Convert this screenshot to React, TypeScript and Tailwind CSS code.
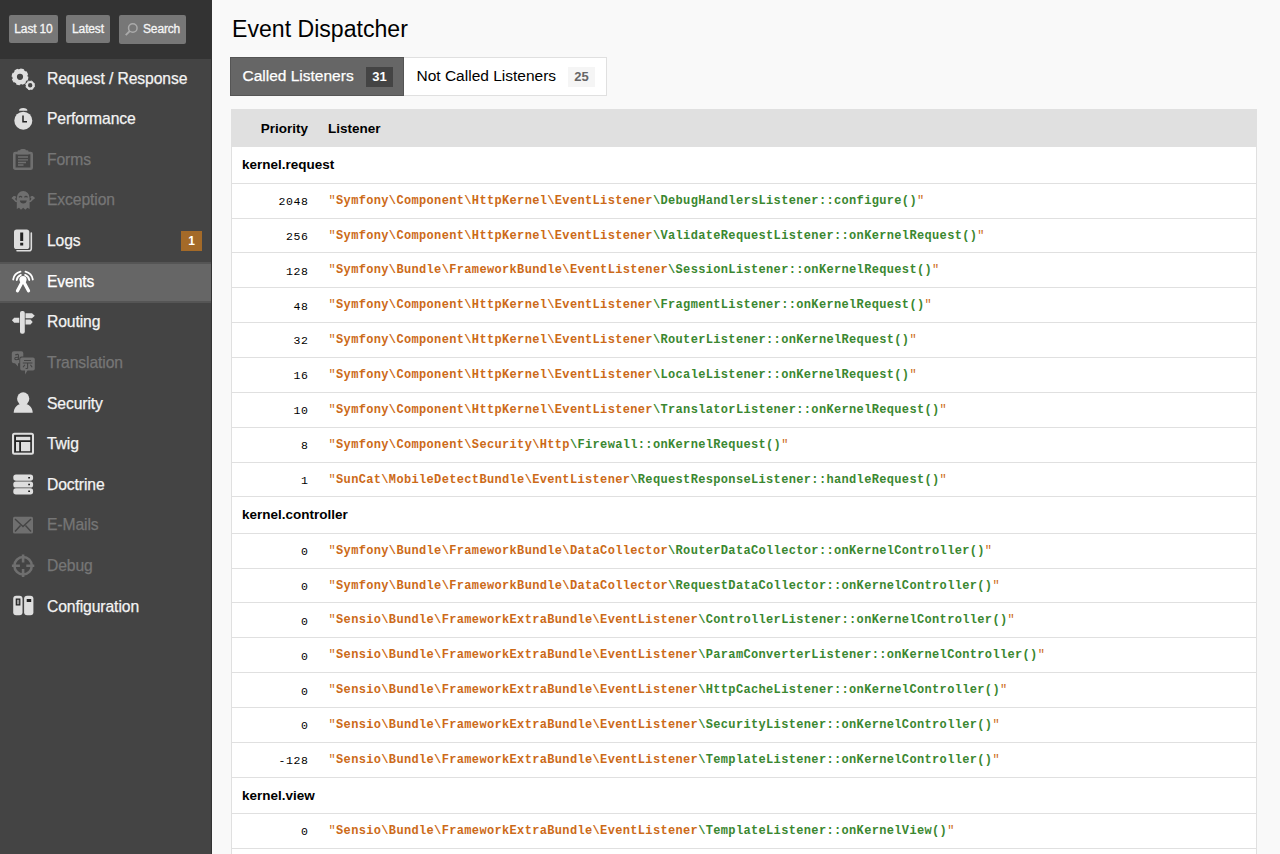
import React from "react";

const icons: Record<string, React.ReactNode> = {
  request: (
    <>
      <circle cx="9" cy="9.8" r="5.4" fill="none" stroke="currentColor" strokeWidth="4.6" />
      <circle cx="9" cy="9.8" r="7.7" fill="none" stroke="currentColor" strokeWidth="1.4" strokeDasharray="3.8 2.25" />
      <circle cx="19.2" cy="18.3" r="3.3" fill="none" stroke="currentColor" strokeWidth="2.2" />
      <circle cx="19.2" cy="18.3" r="4.4" fill="none" stroke="currentColor" strokeWidth="1" strokeDasharray="2 1.46" />
    </>
  ),
  time: (
    <>
      <circle cx="12.3" cy="13.7" r="9" fill="currentColor" />
      <path d="M8 3.800c0-2 1.500-2.800 4.200-2.800s4.200.8 4.200 2.800z" fill="currentColor" />
      <path d="M12 8.500V14.800h4" fill="none" stroke="#222" strokeWidth="1.500" />
    </>
  ),
  forms: (
    <>
      <rect x="3.300" y="5" width="17.400" height="15.700" rx="1" fill="none" stroke="currentColor" strokeWidth="2.600" />
      <path d="M6.500 6.500V3.500Q6.500 2.200 8 2.200h1Q9.300 1 11 1h2q1.700 0 2 1.200h1q1.500 0 1.500 1.300v3z" fill="currentColor" />
      <path d="M7 9h10M7 11.800h10M7 14.500h8M7 17h5.500" stroke="currentColor" strokeWidth="1.300" />
    </>
  ),
  exception: (
    <>
      <path d="M5.800 20V9a6.400 7 0 0 1 12.800 0v11l-2.200-1.200-2 1.900-2.200-1.900-2.200 1.900-2-1.900z" fill="currentColor" />
      <path d="M6.500 12.500Q3 12.500 2.900 7M1 8.500l1.900 1.500L4.700 7.500M18 12.500Q21.500 12.500 21.600 7M23.500 8.500L21.600 10 19.800 7.500" fill="none" stroke="currentColor" strokeWidth="1.600" />
      <path d="M8 8.300q1.500-2 3 0M13.500 8.300q1.500-2 3 0" fill="none" stroke="#444" strokeWidth="1.200" />
      <path d="M8.800 11.500h7q-.5 3-3.500 3t-3.500-3z" fill="#444" />
    </>
  ),
  logs: (
    <>
      <path d="M20.300 4v15.500q0 2.300-2.300 2.300H6" fill="none" stroke="currentColor" strokeWidth="1.600" strokeLinecap="round" />
      <rect x="3" y=".5" width="15.300" height="19.500" rx="2.600" fill="currentColor" />
      <path d="M9.200 3.500h3v8.500h-3zM9.200 13.700h3v2.700h-3z" fill="#222" />
    </>
  ),
  events: (
    <>
      <circle cx="12" cy="9.500" r="3.600" fill="currentColor" />
      <path d="M12 10.500L6.500 20.700M12 10.500L17.500 20.700" stroke="currentColor" strokeWidth="3.300" strokeLinecap="round" />
      <path d="M2.200 9.500A9.800 9.500 0 0 1 9.500 1.700M21.800 9.500A9.800 9.500 0 0 0 14.500 1.700M5.700 10A6.600 6.600 0 0 1 9.900 4.900M18.300 10A6.600 6.600 0 0 0 14.100 4.900" fill="none" stroke="currentColor" strokeWidth="1.800" strokeLinecap="round" />
    </>
  ),
  routing: (
    <>
      <rect x="9" y="0" width="4.800" height="22.700" rx="2" fill="currentColor" />
      <path d="M14.500 2.200h6.500l2.800 2.500L21 7.200h-6.500zM8.300 6.700H3.200L.9 9.200l2.300 2.500h5.100zM14.500 8.400h5l2.200 2.500-2.200 2.500h-5z" fill="currentColor" />
    </>
  ),
  translation: (
    <>
      <path d="M3 .3h7.500q1.800 0 1.800 2v3.200H10.500q-2.200 0-2.200 2.200v4.600H7v3.200L4 12.300H3q-2.200 0-2.200-2V2.500Q.8.300 3 .3z" fill="currentColor" />
      <path d="M11 6.500h11q1.800 0 1.800 1.800v9.500q0 1.800-1.800 1.800h-5.500L14 23.400v-3.800h-3q-1.800 0-1.800-1.800V8.300q0-1.800 1.800-1.800z" fill="currentColor" />
      <path d="M4.200 4Q7.800 2.300 7.500 5v4M7.500 6.200Q3.500 6 3.800 8q1 1.500 3.700-.3" fill="none" stroke="#444" strokeWidth="1.100" />
      <path d="M13 9.500h7M11.800 12h9.600M16.600 12v5.500M16.600 17.500h-2M13.800 13.800l-1.700 2.500M19.400 13.800l1.800 2.500" fill="none" stroke="#444" strokeWidth="1.100" />
    </>
  ),
  security: (
    <>
      <ellipse cx="12.200" cy="6.700" rx="6.100" ry="6.400" fill="currentColor" />
      <path d="M2.700 20.800c.2-4.500 2.300-7.400 6.500-8.800h6c4.200 1.400 6.300 4.300 6.500 8.800z" fill="currentColor" />
    </>
  ),
  twig: (
    <>
      <rect x="2" y="1.700" width="20" height="20" rx="1.500" fill="none" stroke="currentColor" strokeWidth="2" />
      <rect x="3.700" y="3.400" width="16.600" height="16.600" fill="#222" />
      <path d="M5 4.800h14.300v3.500H5zM5 10h3.200v9.200H5zM10 10h9.300v9.200H10z" fill="currentColor" />
    </>
  ),
  doctrine: (
    <>
      <rect x="2.300" y="1.600" width="19.800" height="6.200" rx="2.700" fill="currentColor" />
      <rect x="2.300" y="8.400" width="19.800" height="6.200" rx="2.700" fill="currentColor" />
      <rect x="2.300" y="15.200" width="19.800" height="6.200" rx="2.700" fill="currentColor" />
      <path d="M17.200 3.900h1.800v1.600h-1.800zM17.200 10.700h1.800v1.600h-1.800zM17.200 17.500h1.800v1.600h-1.800z" fill="#222" />
    </>
  ),
  mail: (
    <>
      <rect x="2" y="2.700" width="20" height="16.800" rx="1.500" fill="currentColor" />
      <path d="M4 5l8 7.500 8-7.500M4 17.500l5.500-6M20 17.500l-5.500-6" fill="none" stroke="#444" strokeWidth="1.400" />
    </>
  ),
  debug: (
    <>
      <circle cx="12.100" cy="11.700" r="8.700" fill="none" stroke="currentColor" strokeWidth="2.600" />
      <path d="M12.100.5v8M12.100 14.900v8M.9 11.700h8M15.300 11.700h8" stroke="currentColor" strokeWidth="2.600" />
    </>
  ),
  config: (
    <>
      <rect x="2.200" y=".8" width="9.300" height="19.500" rx="3" fill="currentColor" />
      <rect x="13.100" y=".8" width="9.300" height="19.500" rx="3" fill="currentColor" />
      <path d="M5.300 4.200h3.500v5.600H5.300z" fill="#999" stroke="#222" strokeWidth="1.200" />
      <path d="M15.700 4h4.500v3h-4.500z" fill="#222" />
    </>
  ),
};

type Item = { icon: string; label: string; disabled?: boolean; active?: boolean; badge?: string };
const menu: Item[] = [
  { icon: "request", label: "Request / Response" },
  { icon: "time", label: "Performance" },
  { icon: "forms", label: "Forms", disabled: true },
  { icon: "exception", label: "Exception", disabled: true },
  { icon: "logs", label: "Logs", badge: "1" },
  { icon: "events", label: "Events", active: true },
  { icon: "routing", label: "Routing" },
  { icon: "translation", label: "Translation", disabled: true },
  { icon: "security", label: "Security" },
  { icon: "twig", label: "Twig" },
  { icon: "doctrine", label: "Doctrine" },
  { icon: "mail", label: "E-Mails", disabled: true },
  { icon: "debug", label: "Debug", disabled: true },
  { icon: "config", label: "Configuration" },
];

type Row = [string, string, string];
const SY = "Symfony\\Component\\HttpKernel\\EventListener";
const FB = "Symfony\\Bundle\\FrameworkBundle\\";
const SE = "Sensio\\Bundle\\FrameworkExtraBundle\\EventListener";
const groups: { name: string; rows: Row[] }[] = [
  {
    name: "kernel.request",
    rows: [
      ["2048", SY, "\\DebugHandlersListener::configure()"],
      ["256", SY, "\\ValidateRequestListener::onKernelRequest()"],
      ["128", FB + "EventListener", "\\SessionListener::onKernelRequest()"],
      ["48", SY, "\\FragmentListener::onKernelRequest()"],
      ["32", SY, "\\RouterListener::onKernelRequest()"],
      ["16", SY, "\\LocaleListener::onKernelRequest()"],
      ["10", SY, "\\TranslatorListener::onKernelRequest()"],
      ["8", "Symfony\\Component\\Security\\Http", "\\Firewall::onKernelRequest()"],
      ["1", "SunCat\\MobileDetectBundle\\EventListener", "\\RequestResponseListener::handleRequest()"],
    ],
  },
  {
    name: "kernel.controller",
    rows: [
      ["0", FB + "DataCollector", "\\RouterDataCollector::onKernelController()"],
      ["0", FB + "DataCollector", "\\RequestDataCollector::onKernelController()"],
      ["0", SE, "\\ControllerListener::onKernelController()"],
      ["0", SE, "\\ParamConverterListener::onKernelController()"],
      ["0", SE, "\\HttpCacheListener::onKernelController()"],
      ["0", SE, "\\SecurityListener::onKernelController()"],
      ["-128", SE, "\\TemplateListener::onKernelController()"],
    ],
  },
  { name: "kernel.view", rows: [["0", SE, "\\TemplateListener::onKernelView()"], ["", "", ""]] },
];

function MenuItem({ item }: { item: Item }) {
  const tone = item.active ? "text-white" : item.disabled ? "text-[#767676]" : "text-[#f3f3f3]";
  const iconTone = item.active ? "text-white" : item.disabled ? "text-[#6f6f6f]" : "text-[#dedede]";
  const box = item.active ? "border-[#555] bg-[#666]" : "border-transparent";
  return (
    <li className={`flex h-[40.640px] items-center border-y-2 pl-[11px] pr-[9px] ${box} ${tone}`}>
      <svg viewBox="0 0 24 24" className={`mb-[1px] size-6 shrink-0 ${iconTone}`}>{icons[item.icon]}</svg>
      <span className="mb-[2px] ml-3 flex-1 whitespace-nowrap text-[15.700px] tracking-[-0.1px] [-webkit-text-stroke:0.25px]">{item.label}</span>
      {item.badge && (
        <span className="mb-[2px] flex h-5 w-[21px] items-center justify-center bg-[#a46a28] text-xs font-bold text-white">{item.badge}</span>
      )}
    </li>
  );
}

export default function App() {
  return (
    <div className="flex h-[854px] overflow-hidden bg-[#f9f9f9] font-['Liberation_Sans',Arial,sans-serif] text-black">
      <aside className="w-[212px] shrink-0 border-r border-[#333] bg-[#444]">
        <div className="flex h-[59px] bg-[#333] pl-[9px] pt-[15px] text-[12px] tracking-[-0.15px] text-[#f5f5f5] [-webkit-text-stroke:0.3px]">
          <span className="flex h-7 w-[49px] items-center justify-center whitespace-nowrap rounded-xs bg-[#777]">Last 10</span>
          <span className="ml-2 flex h-7 w-11 items-center justify-center rounded-xs bg-[#777]">Latest</span>
          <span className="ml-[9px] flex h-[29px] w-[67px] items-center rounded-xs bg-[#777] pb-px pl-[6px]">
            <svg viewBox="0 0 14 14" className="mr-[5px] size-[13px] shrink-0 text-[#aaa]" fill="none" stroke="currentColor" strokeWidth="1.600">
              <circle cx="8.400" cy="5.400" r="4.600" />
              <path d="M5.300 8.500L.8 13" strokeWidth="2" />
            </svg>
            Search
          </span>
        </div>
        <ul>
          {menu.map((item) => <MenuItem key={item.label} item={item} />)}
        </ul>
      </aside>
      <main className="min-w-0 flex-1 pl-[19px] pr-[23px]">
        <h2 className="flex h-[57px] items-center pl-px pt-[2px] text-[23.100px]">Event Dispatcher</h2>
        <div className="-ml-px flex h-[39px] text-[15.500px]">
          <div className="flex w-[174px] items-center border border-[#555] bg-[#666] pl-[11.500px] text-white">
            <span className="flex-1 pb-[2px] [-webkit-text-stroke:0.25px]">Called Listeners</span>
            <span className="mr-[10px] flex h-5 w-[27px] items-center justify-center bg-[#444] text-[13px] font-bold">31</span>
          </div>
          <div className="flex w-[203px] items-center border border-l-0 border-[#e0e0e0] bg-white pl-[12.500px]">
            <span className="flex-1 whitespace-nowrap pb-[2px]">Not Called Listeners</span>
            <span className="mr-[11px] flex h-5 w-[27px] items-center justify-center bg-[#f5f5f5] text-[13px] font-bold text-[#666]">25</span>
          </div>
        </div>
        <div className="mt-[13px] border border-[#e0e0e0] bg-white text-[13.500px]">
          <div className="flex h-[37.450px] items-center bg-[#e0e0e0] font-bold">
            <span className="w-[76px] text-right">Priority</span>
            <span className="ml-5">Listener</span>
          </div>
          {groups.map((group) => (
            <section key={group.name}>
              <h3 className="flex h-[36.300px] items-center border-b border-[#e0e0e0] pl-[10px] pt-px font-bold">{group.name}</h3>
              {group.rows.map(([priority, namespace, method], i) => (
                <div key={i} className="flex h-[34.870px] items-center border-b border-[#e0e0e0] font-['Liberation_Mono','Courier_New',monospace] text-[12px] tracking-[0.343px]">
                  <span className="w-[76.500px] pt-[2px] text-right text-[11.500px] tracking-[0.600px]">{priority}</span>
                  {method && (
                    <span className="ml-5 whitespace-nowrap text-[#cc6a18]">
                      "<b>{namespace}</b><b className="text-[#3a8730]">{method}</b>"
                    </span>
                  )}
                </div>
              ))}
            </section>
          ))}
        </div>
      </main>
    </div>
  );
}
